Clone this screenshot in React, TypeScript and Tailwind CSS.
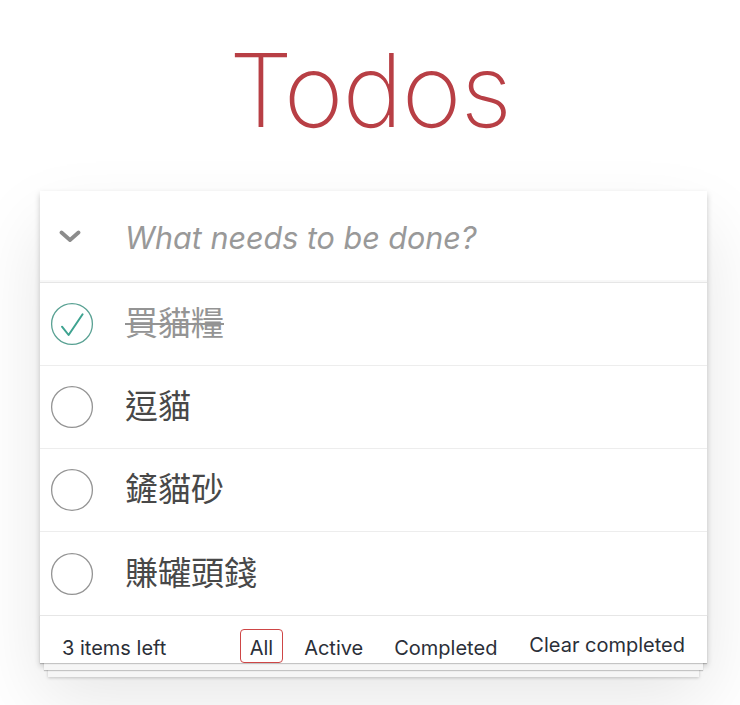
import React from "react";

type Todo = { title: string; done: boolean };

const todos: Todo[] = [
  { title: "買貓糧", done: true },
  { title: "逗貓", done: false },
  { title: "鏟貓砂", done: false },
  { title: "賺罐頭錢", done: false },
];

const filters = ["All", "Active", "Completed"];

const Toggle = ({ done }: { done: boolean }) => (
  <svg width="44" height="44" viewBox="0 0 44 44" className="shrink-0">
    <circle
      cx="22"
      cy="22"
      r="20.4"
      fill="none"
      stroke={done ? "#59a193" : "#949494"}
      strokeWidth="1.3"
    />
    {done && (
      <polyline
        points="12,24.7 18.6,33 32.6,12.3"
        fill="none"
        stroke="#3ea390"
        strokeWidth="2"
        strokeLinecap="round"
        strokeLinejoin="round"
      />
    )}
  </svg>
);

const App = () => {
  return (
    <div className="min-h-[705px] bg-white pt-[39px] font-['Inter','Noto_Sans_CJK_TC',sans-serif]">
      <h1 className="text-center text-[102px] font-extralight leading-none tracking-[-0.01em] text-[#b83f45]">
        Todos
      </h1>

      <section className="ml-[40px] mt-[50px] w-[667px] bg-white shadow-[0_3px_6px_rgba(0,0,0,0.2),0_35px_70px_rgba(0,0,0,0.1)]">
        <header className="flex h-[91px] items-center shadow-[inset_0_-2px_1px_rgba(0,0,0,0.03)]">
          <div className="flex w-[85px] pl-[19px]">
            <svg width="22" height="13" viewBox="0 0 22 13">
              <polyline
                points="2.5,2.5 11,10 19.5,2.5"
                fill="none"
                stroke="#8c8c8c"
                strokeWidth="3.8"
                strokeLinecap="round"
                strokeLinejoin="round"
              />
            </svg>
          </div>
          <span className="pt-[3px] text-[30.5px] italic text-[#999]">
            What needs to be done?
          </span>
        </header>

        <ul className="border-t border-[#e6e6e6]">
          {todos.map((todo, i) => (
            <li
              key={i}
              className="flex h-[83px] items-center border-b border-[#ededed] last:border-b-0"
            >
              <div className="flex w-[85px] items-center pl-[10px]">
                <Toggle done={todo.done} />
              </div>
              <span
                className={
                  todo.done
                    ? "text-[33px] text-[#949494] line-through decoration-[2px]"
                    : "text-[33px] text-[#484848]"
                }
              >
                {todo.title}
              </span>
            </li>
          ))}
        </ul>

        <footer className="grid h-[48px] grid-cols-[1fr_auto_1fr] border-t border-[#e6e6e6] px-[22px] pt-[13px] text-[20px] leading-[24px] text-[#2b2f38] shadow-[0_1px_1px_rgba(0,0,0,0.2),0_11px_0_-4px_#f6f6f6,0_12px_1px_-4px_rgba(0,0,0,0.2),0_22px_0_-8px_#f6f6f6,0_23px_3px_-8px_rgba(0,0,0,0.2)]">
          <span className="pt-[7px]">3 items left</span>
          <ul className="flex gap-[11px]">
            {filters.map((f) => (
              <li key={f}>
                <a
                  className={
                    f === "All"
                      ? "block rounded-[4px] border border-[#ce4646] px-[9px] pb-[2px] pt-[6px]"
                      : "block rounded-[4px] border border-transparent px-[9px] pb-[2px] pt-[6px]"
                  }
                >
                  {f}
                </a>
              </li>
            ))}
          </ul>
          <span className="justify-self-end pt-[4px]">Clear completed</span>
        </footer>
      </section>
    </div>
  );
};

export default App;
